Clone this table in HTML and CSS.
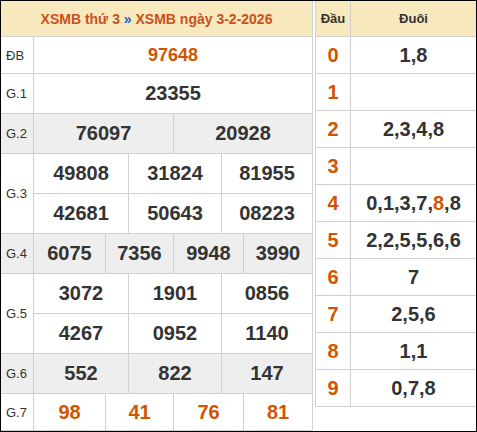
FILE: index.html
```html
<!DOCTYPE html>
<html lang="vi">
<head>
<meta charset="utf-8">
<title>XSMB ngày 3-2-2026</title>
<link rel="stylesheet" href="styles.css">
</head>
<body>
<div class="frame">
  <div class="results">
    <div class="title">XSMB thứ 3 <span class="sep">»</span> XSMB ngày 3-2-2026</div>

    <div class="prize">
      <div class="label">ĐB</div>
      <div class="vals">
        <div class="line c1 first"><div class="num hot small">97648</div></div>
      </div>
    </div>

    <div class="prize">
      <div class="label">G.1</div>
      <div class="vals">
        <div class="line c1"><div class="num">23355</div></div>
      </div>
    </div>

    <div class="prize grey">
      <div class="label">G.2</div>
      <div class="vals">
        <div class="line c2"><div class="num">76097</div><div class="num">20928</div></div>
      </div>
    </div>

    <div class="prize">
      <div class="label">G.3</div>
      <div class="vals">
        <div class="line c3"><div class="num">49808</div><div class="num">31824</div><div class="num">81955</div></div>
        <div class="line c3"><div class="num">42681</div><div class="num">50643</div><div class="num">08223</div></div>
      </div>
    </div>

    <div class="prize grey">
      <div class="label">G.4</div>
      <div class="vals">
        <div class="line c4"><div class="num">6075</div><div class="num">7356</div><div class="num">9948</div><div class="num">3990</div></div>
      </div>
    </div>

    <div class="prize">
      <div class="label">G.5</div>
      <div class="vals">
        <div class="line c3"><div class="num">3072</div><div class="num">1901</div><div class="num">0856</div></div>
        <div class="line c3"><div class="num">4267</div><div class="num">0952</div><div class="num">1140</div></div>
      </div>
    </div>

    <div class="prize grey">
      <div class="label">G.6</div>
      <div class="vals">
        <div class="line c3"><div class="num">552</div><div class="num">822</div><div class="num">147</div></div>
      </div>
    </div>

    <div class="prize last">
      <div class="label">G.7</div>
      <div class="vals">
        <div class="line c4"><div class="num hot">98</div><div class="num hot">41</div><div class="num hot">76</div><div class="num hot">81</div></div>
      </div>
    </div>
  </div>

  <div class="loto">
    <div class="lrow head"><div class="dau">Đầu</div><div class="duoi">Đuôi</div></div>
    <div class="lrow"><div class="dau">0</div><div class="duoi">1,8</div></div>
    <div class="lrow"><div class="dau">1</div><div class="duoi"></div></div>
    <div class="lrow"><div class="dau">2</div><div class="duoi">2,3,4,8</div></div>
    <div class="lrow"><div class="dau">3</div><div class="duoi"></div></div>
    <div class="lrow"><div class="dau">4</div><div class="duoi">0,1,3,7,<span class="hot">8</span>,8</div></div>
    <div class="lrow"><div class="dau">5</div><div class="duoi">2,2,5,5,6,6</div></div>
    <div class="lrow"><div class="dau">6</div><div class="duoi">7</div></div>
    <div class="lrow"><div class="dau">7</div><div class="duoi">2,5,6</div></div>
    <div class="lrow"><div class="dau">8</div><div class="duoi">1,1</div></div>
    <div class="lrow"><div class="dau">9</div><div class="duoi">0,7,8</div></div>
  </div>
</div>
</body>
</html>
```

FILE: styles.css
```css
* { box-sizing: border-box; }

html, body {
  margin: 0;
  padding: 0;
  background: #fff;
}

body {
  font-family: "Liberation Sans", Arial, sans-serif;
  color: #333;
}

.frame {
  width: 477px;
  height: 432px;
  border: 1px solid #000;
  overflow: hidden;
  display: flex;
  align-items: flex-start;
  gap: 2px;
}

/* ---------- left: results ---------- */
.results {
  width: 312px;
  flex: none;
  border-right: 1px solid #d0d0d0;
}

.title {
  height: 36px;
  background: #f8e8bd;
  border-bottom: 1px solid #d0d0d0;
  display: flex;
  align-items: center;
  justify-content: center;
  white-space: pre;
  font-size: 14px;
  font-weight: bold;
  color: #c9511c;
}

.title .sep {
  color: #1e63c4;
}

.prize {
  display: grid;
  grid-template-columns: 33px 1fr;
}

.prize.grey { background: #eeeeee; }

.label {
  border-right: 1px solid #d0d0d0;
  border-bottom: 1px solid #d0d0d0;
  display: flex;
  align-items: center;
  padding-left: 5px;
  font-size: 13px;
  color: #333;
}

.vals {
  display: flex;
  flex-direction: column;
}

.line {
  display: grid;
  height: 40px;
  border-bottom: 1px solid #d0d0d0;
}

.line.first { height: 37px; }
.last .line { height: 37px; }

.line.c1 { grid-template-columns: 1fr; }
.line.c2 { grid-template-columns: 140px 1fr; }
.line.c3 { grid-template-columns: 95px 93px 1fr; }
.line.c4 { grid-template-columns: 72px 68px 70px 1fr; }

.num {
  display: flex;
  align-items: center;
  justify-content: center;
  font-size: 20px;
  font-weight: bold;
  color: #333;
  border-right: 1px solid #d0d0d0;
}

.num.small { font-size: 18px; }

.num:last-child { border-right: 0; }

.hot { color: #d35400; }
.num.hot { color: #d35400; }

/* ---------- right: loto ---------- */
.loto {
  flex: 1;
  border-left: 1px solid #d0d0d0;
}

.lrow {
  display: grid;
  grid-template-columns: 35px 1fr;
  height: 37px;
  border-bottom: 1px solid #d0d0d0;
}

.lrow.head {
  height: 36px;
  background: #f8e8bd;
}

.dau, .duoi {
  display: flex;
  align-items: center;
  justify-content: center;
  font-weight: bold;
}

.dau {
  border-right: 1px solid #d0d0d0;
  color: #d35400;
  font-size: 20px;
}

.duoi {
  font-size: 20px;
  color: #333;
}

.head .dau, .head .duoi {
  font-size: 13px;
  color: #333;
}
```
